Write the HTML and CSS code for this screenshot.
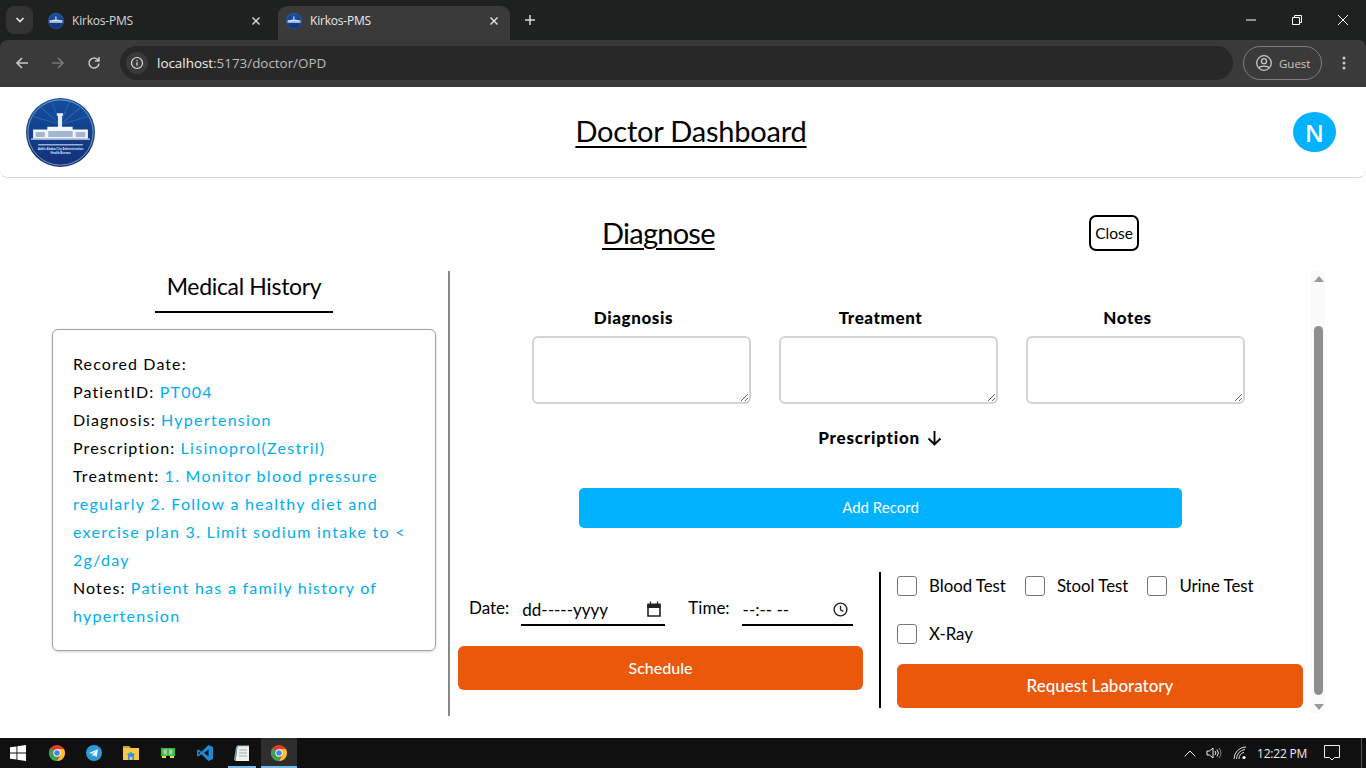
FILE: index.html
```html
<!DOCTYPE html>
<html lang="en">
<head>
<meta charset="utf-8">
<title>Kirkos-PMS</title>
<link rel="stylesheet" href="styles.css">
</head>
<body>
<svg class="defs" width="0" height="0" aria-hidden="true">
  <defs>
    <linearGradient id="seal" x1="0" y1="0" x2="0" y2="1">
      <stop offset="0" stop-color="#12509f"/>
      <stop offset="1" stop-color="#142f78"/>
    </linearGradient>
    <symbol id="seal-art" viewBox="0 0 68 68">
      <circle cx="34" cy="34" r="34" fill="url(#seal)"/>
      <circle cx="34" cy="34" r="32.200" fill="none" stroke="#c8d6ea" stroke-width=".6"/>
      <path d="M34 26 6 18M34 26 14 9M34 26 26 5M34 26 42 5M34 26 54 9M34 26 62 18" stroke="#2a66ad" stroke-width="1" fill="none"/>
      <rect x="30.500" y="15" width="6" height="2.600" fill="#e6edf6"/>
      <rect x="31.500" y="17" width="4" height="13" fill="#e6edf6"/>
      <path d="M7 31h14v-2.600h25v2.600h15v9H7z" fill="#f2f5fa"/>
      <path d="M9.500 33.500h9v5h-9zM22 32.500h24v6H22zM49 33.500h9.500v5H49z" fill="#a4b6cf"/>
      <rect x="5" y="40" width="58" height="1" fill="#fff"/>
    </symbol>
  </defs>
</svg>

<div class="chrome">
  <div class="tabstrip">
    <div class="tabsearch">
      <svg width="10" height="6" viewBox="0 0 10 6"><path d="M1.500 1 5 4.500 8.500 1" fill="none" stroke="#e8e8e8" stroke-width="1.600"/></svg>
    </div>
    <div class="tab">
      <svg class="favicon"><use href="#seal-art"/></svg>
      <span class="tabtitle">Kirkos-PMS</span>
      <svg class="tabclose" viewBox="0 0 10 10"><path d="M1.500 1.500l7 7M8.500 1.500l-7 7" stroke="#d8d8d8" stroke-width="1.400"/></svg>
    </div>
    <div class="tab tab-active">
      <svg class="favicon"><use href="#seal-art"/></svg>
      <span class="tabtitle">Kirkos-PMS</span>
      <svg class="tabclose" viewBox="0 0 10 10"><path d="M1.500 1.500l7 7M8.500 1.500l-7 7" stroke="#e8e8e8" stroke-width="1.400"/></svg>
    </div>
    <svg class="newtab" viewBox="0 0 12 12"><path d="M6 1v10M1 6h10" stroke="#d8d8d8" stroke-width="1.500"/></svg>
    <div class="winbtns">
      <svg width="12" height="12" viewBox="0 0 12 12"><path d="M1 6h10" stroke="#fff" stroke-width="1"/></svg>
      <svg width="12" height="12" viewBox="0 0 12 12"><path d="M1.500 3.500h7v7h-7zM3.500 3.500v-2h7v7h-2" fill="none" stroke="#fff" stroke-width="1"/></svg>
      <svg width="12" height="12" viewBox="0 0 12 12"><path d="M1 1l10 10M11 1 1 11" stroke="#fff" stroke-width="1"/></svg>
    </div>
  </div>
  <div class="toolbar">
    <svg class="navicon" viewBox="0 0 16 16"><path d="M14 8H3M8 3 3 8l5 5" fill="none" stroke="#c8c8c8" stroke-width="1.600"/></svg>
    <svg class="navicon" viewBox="0 0 16 16"><path d="M2 8h11M8 3l5 5-5 5" fill="none" stroke="#777" stroke-width="1.600"/></svg>
    <svg class="navicon" viewBox="0 0 16 16"><path d="M13 8.500A5 5 0 1 1 11.500 4.500L13 6M13 2v4H9" fill="none" stroke="#c8c8c8" stroke-width="1.500"/></svg>
    <div class="omnibox">
      <span class="infobtn">
        <svg width="14" height="14" viewBox="0 0 14 14"><circle cx="7" cy="7" r="5.500" fill="none" stroke="#e0e0e0" stroke-width="1.200"/><path d="M7 6.200v3.600M7 4.100v1.200" stroke="#e0e0e0" stroke-width="1.200"/></svg>
      </span>
      <span class="url"><span class="url-host">localhost</span>:5173/doctor/OPD</span>
    </div>
    <div class="guest">
      <svg width="18" height="18" viewBox="0 0 18 18"><circle cx="9" cy="9" r="7.300" fill="none" stroke="#c8c8c8" stroke-width="1.300"/><circle cx="9" cy="7.200" r="2.500" fill="none" stroke="#c8c8c8" stroke-width="1.300"/><path d="M4 14c1-2.600 9-2.600 10 0" fill="none" stroke="#c8c8c8" stroke-width="1.300"/></svg>
      <span>Guest</span>
    </div>
    <svg class="kebab" width="4" height="14" viewBox="0 0 4 14"><circle cx="2" cy="2" r="1.500" fill="#c8c8c8"/><circle cx="2" cy="7" r="1.500" fill="#c8c8c8"/><circle cx="2" cy="12" r="1.500" fill="#c8c8c8"/></svg>
  </div>
</div>

<div class="app">
  <header class="topbar">
    <svg class="logo" viewBox="0 0 68 68">
      <use href="#seal-art" width="68" height="68"/>
      <rect x="12" y="45.500" width="44" height="1.200" fill="#b9c9e0"/>
      <text x="34" y="51" class="seal-en" text-anchor="middle">Addis Ababa City Administration</text>
      <text x="34" y="55" class="seal-en" text-anchor="middle">Health Bureau</text>
    </svg>
    <h1 class="dash-title">Doctor Dashboard</h1>
    <div class="avatar">N</div>
  </header>

  <div class="titlerow">
    <h2 class="diag-title">Diagnose</h2>
    <button class="closebtn" type="button">Close</button>
  </div>

  <main class="columns">
    <section class="history">
      <h3 class="history-title">Medical History</h3>
      <div class="record">
        <p>Recored Date:</p>
        <p>PatientID: <span class="val">PT004</span></p>
        <p>Diagnosis: <span class="val">Hypertension</span></p>
        <p>Prescription: <span class="val">Lisinoprol(Zestril)</span></p>
        <p>Treatment: <span class="val">1. Monitor blood pressure regularly 2. Follow a healthy diet and exercise plan 3. Limit sodium intake to &lt; 2g/day</span></p>
        <p>Notes: <span class="val">Patient has a family history of hypertension</span></p>
      </div>
    </section>

    <section class="form">
      <div class="fields">
        <label class="field"><span>Diagnosis</span><textarea></textarea></label>
        <label class="field"><span>Treatment</span><textarea></textarea></label>
        <label class="field"><span>Notes</span><textarea></textarea></label>
      </div>
      <div class="prescription">Prescription <span class="arrow">
        <svg width="15" height="16" viewBox="0 0 15 16"><path d="M7.500 1v13M1.500 8.500 7.500 14.500 13.500 8.500" fill="none" stroke="#000" stroke-width="1.900"/></svg></span></div>
      <button class="addbtn" type="button">Add Record</button>
      <div class="lower">
        <div class="schedule">
          <div class="datetime">
            <span class="dt-label">Date:</span>
            <div class="dt-field dt-date">
              <span>dd-----yyyy</span>
              <svg width="14" height="16" viewBox="0 0 14 16"><path d="M1 4h12v11H1z" fill="none" stroke="#222" stroke-width="1.600"/><path d="M1 3h12v3.500H1zM3.500 .500v3M10.500 .500v3" fill="#222" stroke="#222" stroke-width="1.200"/></svg>
            </div>
            <span class="dt-label dt-label-time">Time:</span>
            <div class="dt-field dt-time">
              <span>--:-- --</span>
              <svg width="15" height="15" viewBox="0 0 16 16"><circle cx="8" cy="8" r="6.800" fill="none" stroke="#222" stroke-width="1.500"/><path d="M8 4v4.300l3 1.700" fill="none" stroke="#222" stroke-width="1.400"/></svg>
            </div>
          </div>
          <button class="orangebtn" type="button">Schedule</button>
        </div>
        <div class="labs">
          <div class="checks">
            <label class="check"><input type="checkbox"><span>Blood Test</span></label>
            <label class="check"><input type="checkbox"><span>Stool Test</span></label>
            <label class="check"><input type="checkbox"><span>Urine Test</span></label>
            <label class="check"><input type="checkbox"><span>X-Ray</span></label>
          </div>
          <button class="orangebtn orangebtn-lg" type="button">Request Laboratory</button>
        </div>
      </div>
    </section>

    <div class="scrollbar">
      <svg class="sb-arrow" width="10" height="6" viewBox="0 0 10 6"><path d="M5 0l5 6H0z" fill="#9a9a9a"/></svg>
      <div class="sb-thumb"></div>
      <svg class="sb-arrow" width="10" height="6" viewBox="0 0 10 6"><path d="M5 6 0 0h10z" fill="#9a9a9a"/></svg>
    </div>
  </main>
</div>

<footer class="taskbar">
  <svg class="startlogo" width="16" height="16" viewBox="0 0 16 16"><path d="M0 2.300 6.500 1.400V7.500H0zM7.400 1.300 16 0v7.500H7.400zM0 8.400H6.500V14.600L0 13.700zM7.400 8.400H16V16L7.400 14.800z" fill="#fff"/></svg>
  <div class="tb-icons">
    <span class="tb-item">
      <svg width="16" height="16" viewBox="0 0 16 16"><circle cx="8" cy="8" r="8" fill="#e33b2e"/><path d="M8 8 1 12a8 8 0 0 0 7 4z" fill="#2fa84f"/><path d="M8 4h6.900A8 8 0 0 1 8 16l3.400-6z" fill="#fbc02d"/><path d="M1 12A8 8 0 0 1 1.800 3L5 8z" fill="#2fa84f"/><circle cx="8" cy="8" r="3.700" fill="#fff"/><circle cx="8" cy="8" r="2.800" fill="#4285f4"/></svg>
    </span>
    <span class="tb-item">
      <svg width="16" height="16" viewBox="0 0 16 16"><circle cx="8" cy="8" r="8" fill="#2a9bd8"/><path d="M3 8 12 4.200 10.700 12 8 10.200 6.800 11.500 6.500 9.300 10.500 5.800 5.500 8.800z" fill="#fff"/></svg>
    </span>
    <span class="tb-item">
      <svg width="16" height="16" viewBox="0 0 16 16"><path d="M0 1h6l1.500 2H16v12H0z" fill="#f8c84a"/><path d="M0 1h6l1.500 2H0z" fill="#d89a28"/><path d="M5 15V10h6v5H9.300v-3H6.700v3z" fill="#3d8fd8"/><path d="M3.500 10 8 7l4.500 3z" fill="#3d8fd8"/></svg>
    </span>
    <span class="tb-item">
      <svg width="16" height="12" viewBox="0 0 16 12"><path d="M1 1h14v8H1z" fill="#2fc23a"/><rect x="3.500" y="2.500" width="3.500" height="5" fill="#b8c2a8"/><rect x="9" y="2.500" width="3.500" height="5" fill="#b8c2a8"/><path d="M2 9h4v2H2zM10 9h4v2h-4z" fill="#e8e04a"/></svg>
    </span>
    <span class="tb-item">
      <svg width="16" height="16" viewBox="0 0 16 16"><path d="M11.500 0 16 2v12l-4.500 2L4.300 9.300 1.500 11.500 0 10.700V5.300l1.500-.8 2.800 2.200z" fill="#1f8ad2"/><path d="M11.500 4.600 7 8l4.500 3.400z" fill="#101010"/><path d="M1.500 6.300v3.400L3.200 8z" fill="#101010"/></svg>
    </span>
    <span class="tb-item tb-open">
      <svg width="16" height="17" viewBox="0 0 16 17"><path d="M3.500 1H15v15H1.500z" fill="#f2f2ea"/><path d="M3.500 1 1.500 16 0 15 2 2z" fill="#6fa6b8"/><path d="M5 5h8M5 8h8M5 11h8" stroke="#8fb0c0" stroke-width="1"/><path d="M4 0v2M6 0v2M8 0v2M10 0v2M12 0v2M14 0v2" stroke="#bbb" stroke-width="1"/></svg>
    </span>
    <span class="tb-item tb-active">
      <svg width="16" height="16" viewBox="0 0 16 16"><circle cx="8" cy="8" r="8" fill="#e33b2e"/><path d="M8 8 1 12a8 8 0 0 0 7 4z" fill="#2fa84f"/><path d="M8 4h6.900A8 8 0 0 1 8 16l3.400-6z" fill="#fbc02d"/><path d="M1 12A8 8 0 0 1 1.800 3L5 8z" fill="#2fa84f"/><circle cx="8" cy="8" r="3.700" fill="#fff"/><circle cx="8" cy="8" r="2.800" fill="#4285f4"/></svg>
    </span>
  </div>
  <div class="tray">
    <svg width="12" height="7" viewBox="0 0 12 7"><path d="M.7 6.300 6 1l5.300 5.300" fill="none" stroke="#eee" stroke-width="1"/></svg>
    <svg class="tray-sound" width="16" height="14" viewBox="0 0 16 14"><path d="M1 5h2.500L7 2v10L3.500 9H1z" fill="none" stroke="#eee" stroke-width="1"/><path d="M9 5a3 3 0 0 1 0 4M11 3.500a5.500 5.500 0 0 1 0 7" fill="none" stroke="#eee" stroke-width="1"/><path d="M13 2a8 8 0 0 1 0 10" fill="none" stroke="#888" stroke-width="1"/></svg>
    <svg class="tray-wifi" width="14" height="14" viewBox="0 0 14 14"><path d="M1 13A12 12 0 0 1 13 1M3.500 13A9.500 9.500 0 0 1 12 3.500M6 13A7 7 0 0 1 11 6.300" fill="none" stroke="#ddd" stroke-width="1"/><circle cx="11" cy="11.500" r="1.600" fill="#fff"/></svg>
    <span class="clock">12:22 PM</span>
    <svg class="tray-note" width="16" height="16" viewBox="0 0 16 16"><path d="M.500.500h15v12h-5L8 15l-2.500-2.500h-5z" fill="none" stroke="#eee" stroke-width="1"/></svg>
    <span class="showdesk"></span>
  </div>
</footer>
</body>
</html>
```
FILE: styles.css
```css
* { box-sizing: border-box; }
html, body { height: 100%; margin: 0; }
body {
  display: flex;
  flex-direction: column;
  height: 768px;
  overflow: hidden;
  background: #fff;
  color: #000;
  font-family: "Lato", "Liberation Sans", sans-serif;
}
.defs { position: absolute; }
.seal-en { font: 700 2.900px "Liberation Sans", sans-serif; fill: #dfe8f3; }

/* browser frame */
.chrome { flex: 0 0 87px; background: #1f2020; font-family: "Open Sans", "Liberation Sans", sans-serif; }
.tabstrip { height: 40px; display: flex; align-items: flex-end; }
.tabsearch {
  width: 27px; height: 28px; margin: 0 0 6px 6px; border-radius: 8px; background: #333;
  display: flex; align-items: center; justify-content: center;
}
.tab {
  width: 232px; height: 34px; padding: 0 11px 5px 8px; margin-left: 7px;
  display: flex; align-items: center; color: #d8d8d8; font-size: 12px; letter-spacing: -.2px;
}
.tab + .tab { margin-left: 6px; }
.tab-active { background: #3a3a3a; border-radius: 9px 9px 0 0; color: #e8e8e8; }
.favicon { width: 16px; height: 16px; flex: none; }
.tabtitle { flex: 1; margin-left: 8px; }
.tabclose { width: 10px; height: 10px; flex: none; }
.newtab { width: 12px; height: 12px; margin: 0 0 14px 14px; }
.winbtns {
  margin-left: auto; height: 40px; padding-right: 17px;
  display: flex; align-items: center; gap: 34px;
}
.toolbar {
  height: 47px; background: #3a3a3a; border-radius: 8px 8px 0 0;
  display: flex; align-items: center; padding: 0 14px 1px 14px;
}
.navicon { width: 16px; height: 16px; flex: none; margin-right: 20px; }
.navicon:nth-child(3) { margin-right: 18px; }
.omnibox {
  width: 1113px; height: 34px; background: #282828; border-radius: 17px;
  display: flex; align-items: center; padding-left: 6px; color: #bdbdbd; font-size: 13.400px;
}
.infobtn {
  width: 22px; height: 22px; border-radius: 50%; background: #3a3a3a;
  display: flex; align-items: center; justify-content: center;
}
.url { margin-left: 9px; }
.url-host { color: #f0f0f0; }
.guest {
  width: 79px; height: 34px; margin-left: 10px; border: 1px solid #7f7f7f; border-radius: 17px;
  display: flex; align-items: center; gap: 6px; padding-left: 11px; color: #c8c8c8; font-size: 11.500px;
}
.kebab { margin-left: 20px; }

/* app */
.app { flex: 1; min-height: 0; display: flex; flex-direction: column; }
.topbar {
  height: 91px; flex: none; padding: 0 30px 0 26px;
  display: flex; align-items: center; justify-content: space-between;
  border-bottom: 1px solid #d4d4d4; border-radius: 0 0 8px 8px;
}
.logo { width: 69px; height: 69px; }
.dash-title {
  margin: 0 0 4px -6px; font-size: 29px; letter-spacing: -.2px; font-weight: 400;
  text-decoration: underline; text-decoration-thickness: 2px; text-underline-offset: 4px;
}
.avatar {
  width: 43px; height: 40px; border-radius: 50%; background: #00b2ff; color: #fff;
  display: flex; align-items: center; justify-content: center;
  font: 600 24px "Open Sans", sans-serif;
}
.titlerow { height: 93px; flex: none; display: flex; align-items: flex-start; padding: 35px 0 0 602px; }
.diag-title {
  margin: 1px 0 0; width: 487px; font-size: 29px; letter-spacing: -.75px; line-height: 38px; font-weight: 400;
  text-decoration: underline; text-decoration-thickness: 2px; text-underline-offset: 4px;
}
.closebtn {
  width: 50px; height: 36px; margin-top: 2px; padding: 0; background: #fff; color: #000;
  border: 2px solid #000; border-radius: 7px; font: 400 15.500px "Lato", sans-serif;
}
.columns { height: 445px; flex: none; display: flex; }

/* medical history */
.history { width: 450px; flex: none; padding: 0 12px 0 52px; border-right: 2px solid #888; display: flex; flex-direction: column; }
.history-title {
  align-self: center; margin: 0 0 16px; width: 178px; height: 42px;
  text-align: center; font-size: 23px; letter-spacing: -.33px; line-height: 30px; font-weight: 400; border-bottom: 2px solid #000;
}
.record {
  width: 384px; border: 1px solid #a3a3a3; border-radius: 6px; padding: 20px;
  box-shadow: 0 1px 3px rgba(0,0,0,.18);
  font-size: 16px; line-height: 28px; letter-spacing: 1.100px;
}
.record p { margin: 0; }
.val { color: #00aeef; letter-spacing: 1.280px; }

/* form */
.form { width: 861px; flex: none; padding: 35px 0 0 1px; display: flex; flex-direction: column; }
.fields { display: flex; gap: 28px; padding-left: 81px; }
.field { width: 219px; display: flex; flex-direction: column; gap: 6px; font-size: 17px; font-weight: 900; letter-spacing: .6px; line-height: 24px; text-align: center; }
.field span { padding-right: 16px; }
.field textarea { width: 219px; height: 68px; border: 2px solid #d4d4d4; border-radius: 6px; background: #fff; display: block; }
.prescription { margin-top: 22px; height: 24px; line-height: 24px; text-align: center; font-size: 17px; font-weight: 900; letter-spacing: .8px; width: 858px; }
.arrow { margin-left: 2px; }
.arrow svg { vertical-align: -2px; }
.addbtn {
  width: 603px; height: 40px; margin: 38px 0 0 128px; padding: 0 0 2px; border: 0; border-radius: 5px;
  background: #00b2ff; color: #fff; font: 400 15px "Lato", sans-serif;
}
.lower { margin-top: 44px; display: flex; margin-left: 7px; height: 136px; }
.schedule { width: 405px; height: 118px; display: flex; flex-direction: column; justify-content: flex-end; margin-right: 16px; flex: none; }
.datetime { display: flex; align-items: center; padding-left: 11px; margin-bottom: 20px; height: 34px; }
.dt-label { font-size: 17px; padding-bottom: 4px; }
.dt-label-time { margin-left: 23px; }
.dt-field {
  height: 34px; margin-left: 12px; border-bottom: 2px solid #000; padding: 2px 4px 0 1px;
  display: flex; align-items: center; justify-content: space-between; font-size: 17px; flex: none;
}
.dt-date { width: 144px; }
.dt-time { width: 111px; padding-right: 5px; }
.orangebtn {
  width: 100%; height: 44px; padding: 0 0 2px; border: 0; border-radius: 6px; background: #ea580c; color: #fff;
  font: 500 16px "Lato", sans-serif; flex: none;
}
.orangebtn-lg { font-size: 17px; }
.labs { width: 426px; flex: none; border-left: 2px solid #000; padding: 0 2px 0 16px; display: flex; flex-direction: column; }
.checks { display: flex; flex-wrap: wrap; gap: 24px 19px; padding-top: 1px; margin-bottom: 19px; }
.check { display: flex; align-items: center; gap: 12px; height: 24px; font-size: 16.800px; }
.check input {
  appearance: none; -webkit-appearance: none; width: 20px; height: 20px; margin: 1px 0 0;
  border: 1px solid #767676; border-radius: 3px; background: #fff;
}

/* fake scrollbar */
.scrollbar {
  width: 14px; flex: none; background: #fafafa;
  display: flex; flex-direction: column; align-items: center; padding: 5px 0 3px 1px; height: 442px;
}
.sb-thumb { width: 9px; height: 371px; margin: 44px 0 9px; border-radius: 5px; background: #8e8e8e; }
.sb-arrow { flex: none; }

/* taskbar */
.taskbar { flex: 0 0 30px; background: #101010; display: flex; align-items: center; color: #eee; font-family: "Open Sans", sans-serif; }
.startlogo { margin-left: 10px; flex: none; }
.tb-icons { display: flex; margin-left: 13px; height: 30px; gap: 1px; }
.tb-item { width: 36px; height: 30px; display: flex; align-items: center; justify-content: center; position: relative; }
.tb-open::after, .tb-active::after { content: ""; position: absolute; left: 4px; right: 4px; bottom: 0; height: 2px; background: #76b9ed; }
.tb-active { background: #2e2e2e; }
.tb-active::after { left: 0; right: 0; }
.tray { margin-left: auto; display: flex; align-items: center; height: 30px; }
.tray-sound { margin-left: 10px; }
.tray-wifi { margin-left: 11px; }
.clock { font-size: 12px; letter-spacing: -.2px; margin-left: 10px; width: 48px; text-align: center; white-space: nowrap; }
.tray-note { margin-left: 19px; }
.showdesk { width: 1px; height: 30px; background: #555; margin-left: 21px; margin-right: 4px; }
```
